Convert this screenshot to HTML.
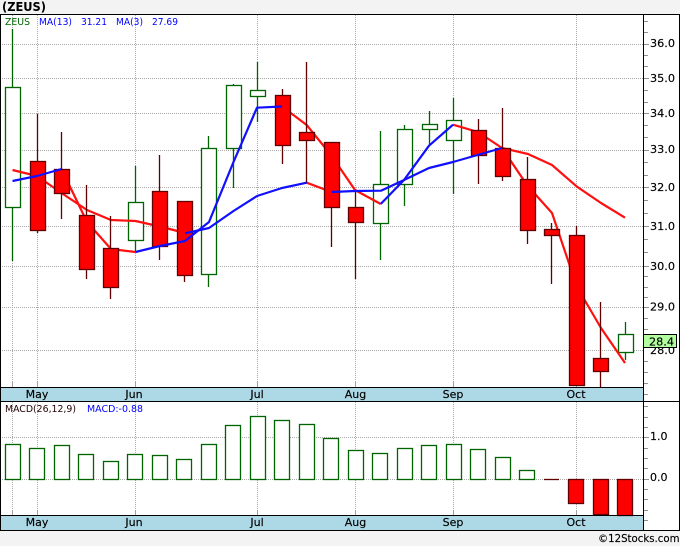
<!DOCTYPE html>
<html><head><meta charset="utf-8"><style>
html,body{margin:0;padding:0;background:#f3f3f3}
svg{display:block}
text{font-family:"DejaVu Sans","Liberation Sans",sans-serif}
.c{shape-rendering:crispEdges}
</style></head><body>
<svg width="680" height="546" viewBox="0 0 680 546" xmlns="http://www.w3.org/2000/svg">
<rect width="680" height="546" fill="#f3f3f3"/>
<rect x="0" y="14" width="680" height="517" fill="#fff"/>
<g class="c">
<rect x="0" y="387" width="643" height="14" fill="#add8e6"/>
<rect x="0" y="515" width="643" height="15" fill="#add8e6"/>
<g stroke="#aaaaaa" stroke-width="1" stroke-dasharray="1 1" fill="none">
<path d="M2 44.500H643M2 78.500H643M2 113.500H643M2 150.500H643M2 187.500H643M2 226.500H643M2 266.500H643M2 307.500H643M2 350.500H643M2 437.500H643M2 479.500H643"/>
<path d="M12.500 15V382M37.500 15V382M135.500 15V382M257.500 15V382M355.500 15V382M453.500 15V382M576.500 15V382"/>
<path d="M12.500 402V510M37.500 402V510M135.500 402V510M257.500 402V510M355.500 402V510M453.500 402V510M576.500 402V510"/>
</g>
<path stroke="#a0a0a0" fill="none" d="M12.500 382V387M37.500 382V387M135.500 382V387M257.500 382V387M355.500 382V387M453.500 382V387M576.500 382V387M12.500 510V515M37.500 510V515M135.500 510V515M257.500 510V515M355.500 510V515M453.500 510V515M576.500 510V515"/>
<path stroke="#909090" fill="none" d="M644 21.500h4M644 32.500h4M644 44.500h5M644 55.500h4M644 66.500h4M644 78.500h5M644 90.500h4M644 102.500h4M644 113.500h5M644 125.500h4M644 137.500h4M644 150.500h5M644 162.500h4M644 175.500h4M644 187.500h5M644 200.500h4M644 213.500h4M644 226.500h5M644 239.500h4M644 252.500h4M644 266.500h5M644 276.500h4M644 287.500h4M644 297.500h4M644 307.500h5M644 318.500h4M644 329.500h4M644 361.500h4M644 372.500h4M644 383.500h4M644 394.500h4M644 406.500h4M644 417.500h4M644 427.500h4M644 437.500h5M644 448.500h4M644 458.500h4M644 468.500h4M644 479.500h5M644 489.500h4M644 499.500h4M644 510.500h4M644 520.500h4"/>
</g>
<!-- green candles -->
<g fill="#fff" stroke="#006400" stroke-width="1.3">
<path fill="none" d="M12.500 29V87M12.500 207V261M135.500 166V202M135.500 240V252M208.500 136V148M208.500 274V287M233.500 84V85M233.500 148V188M257.500 62V90M257.500 96V122M380.500 131V184M380.500 223V260M404.500 125V129M404.500 184V206M429.500 111V124M429.500 129V145M453.500 98V120M453.500 140V194M625.500 322V334M625.500 352V360"/>
<rect x="5.500" y="87.500" width="15" height="120"/>
<rect x="128.500" y="202.500" width="15" height="38"/>
<rect x="201.500" y="148.500" width="15" height="126"/>
<rect x="226.500" y="85.500" width="15" height="63"/>
<rect x="250.500" y="90.500" width="15" height="6"/>
<rect x="373.500" y="184.500" width="15" height="39"/>
<rect x="397.500" y="129.500" width="15" height="55"/>
<rect x="422.500" y="124.500" width="15" height="5"/>
<rect x="446.500" y="120.500" width="15" height="20"/>
<rect x="618.500" y="334.500" width="15" height="18"/>
</g>
<!-- red MA segments -->
<g fill="none" stroke="#ff1010" stroke-width="2.2" stroke-linejoin="round">
<polyline points="12.500,170 37,176 61.500,193 87,210 111,220 135.500,221 160,226.500 185,233"/>
<polyline points="61.500,169 87,222 111,249 135.500,252"/>
<polyline points="282,106.500 306.700,125 331,155 355,190 380.700,204"/>
<polyline points="306.700,182.700 331.500,192"/>
<polyline points="453,124.700 478,132 502,148 527,185 552,213 577,287 601,328 625,363"/>
<polyline points="502,148 528,154 552,165 577,186.700 601,203 625,217.700"/>
</g>
<!-- red candles -->
<g stroke-width="1.3">
<path fill="none" stroke="#600000" d="M37.500 114V161M37.500 230V233M61.500 132V169M61.500 193V219M86.500 185V215M86.500 269V279M110.500 216V248M110.500 287V299M159.500 155V191M159.500 246V260M184.500 275V282M282.500 89V95M282.500 145V164M306.500 62V132M306.500 140V183M331.500 207V247M355.500 190V207M355.500 222V279M478.500 119V130M478.500 155V184M502.500 108V148M502.500 176V181M527.500 157V179M527.500 230V244M551.500 223V229M551.500 235V284M576.500 226V235M600.500 302V358M600.500 371V387"/>
<g fill="#ff0000" stroke="#600000">
<rect x="30.500" y="161.500" width="15" height="69"/>
<rect x="54.500" y="169.500" width="15" height="24"/>
<rect x="79.500" y="215.500" width="15" height="54"/>
<rect x="103.500" y="248.500" width="15" height="39"/>
<rect x="152.500" y="191.500" width="15" height="55"/>
<rect x="177.500" y="201.500" width="15" height="74"/>
<rect x="275.500" y="95.500" width="15" height="50"/>
<rect x="299.500" y="132.500" width="15" height="8"/>
<rect x="324.500" y="142.500" width="15" height="65"/>
<rect x="348.500" y="207.500" width="15" height="15"/>
<rect x="471.500" y="130.500" width="15" height="25"/>
<rect x="495.500" y="148.500" width="15" height="28"/>
<rect x="520.500" y="179.500" width="15" height="51"/>
<rect x="544.500" y="229.500" width="15" height="6"/>
<rect x="569.500" y="235.500" width="15" height="150"/>
<rect x="593.500" y="358.500" width="15" height="13"/>
</g>
</g>
<!-- blue MA segments -->
<g fill="none" stroke="#1010ff" stroke-width="2.2" stroke-linejoin="round">
<polyline points="12.500,181 37,176 61.500,169"/>
<polyline points="135.500,252 160,246 185,241 209,222 233.500,162 257,107.700 282,106.500"/>
<polyline points="185,233.300 209,228 233.500,211 257,196 282,188 306.700,182.700"/>
<polyline points="331.500,192 355,191 381,190.700 404,180 429,168 453,162 502,148"/>
<polyline points="380.700,204 404,180 429,145.700 453,124.700"/>
</g>
<!-- MACD bars -->
<g fill="#fff" stroke="#006400" stroke-width="1.3">
<rect x="5.500" y="444.500" width="15" height="35"/>
<rect x="29.500" y="448.500" width="15" height="31"/>
<rect x="54.500" y="445.500" width="15" height="34"/>
<rect x="78.500" y="454.500" width="15" height="25"/>
<rect x="103.500" y="461.500" width="15" height="18"/>
<rect x="127.500" y="454.500" width="15" height="25"/>
<rect x="152.500" y="455.500" width="15" height="24"/>
<rect x="176.500" y="459.500" width="15" height="20"/>
<rect x="201.500" y="444.500" width="15" height="35"/>
<rect x="225.500" y="425.500" width="15" height="54"/>
<rect x="250.500" y="416.500" width="15" height="63"/>
<rect x="274.500" y="420.500" width="15" height="59"/>
<rect x="299.500" y="424.500" width="15" height="55"/>
<rect x="323.500" y="438.500" width="15" height="41"/>
<rect x="348.500" y="450.500" width="15" height="29"/>
<rect x="372.500" y="453.500" width="15" height="26"/>
<rect x="397.500" y="448.500" width="15" height="31"/>
<rect x="421.500" y="445.500" width="15" height="34"/>
<rect x="446.500" y="444.500" width="15" height="35"/>
<rect x="470.500" y="449.500" width="15" height="30"/>
<rect x="495.500" y="457.500" width="15" height="22"/>
<rect x="519.500" y="470.500" width="15" height="9"/>
</g>
<g fill="#ff0000" stroke="#600000" stroke-width="1.3">
<path fill="none" d="M544 479.500H559"/>
<rect x="568.500" y="479.500" width="15" height="24"/>
<rect x="593.500" y="479.500" width="15" height="35"/>
<rect x="617.500" y="479.500" width="15" height="36"/>
</g>
<!-- frame -->
<g class="c" fill="#000">
<rect x="0" y="14" width="680" height="1"/>
<rect x="0" y="14" width="1" height="517"/>
<rect x="679" y="14" width="1" height="517"/>
<rect x="643" y="14" width="1" height="517"/>
<rect x="0" y="387" width="643" height="1"/>
<rect x="0" y="401" width="680" height="1"/>
<rect x="0" y="515" width="643" height="1"/>
<rect x="0" y="530" width="680" height="1"/>
</g>
<text x="2" y="11" font-size="12" font-weight="bold" fill="#000" textLength="44" lengthAdjust="spacingAndGlyphs">(ZEUS)</text>
<g font-size="10">
<text x="5" y="25" fill="#006400" textLength="25" lengthAdjust="spacingAndGlyphs">ZEUS</text>
<text x="39" y="25" fill="#0000ff" textLength="33" lengthAdjust="spacingAndGlyphs">MA(13)</text>
<text x="81" y="25" fill="#0000ff" textLength="26" lengthAdjust="spacingAndGlyphs">31.21</text>
<text x="116" y="25" fill="#0000ff" textLength="27" lengthAdjust="spacingAndGlyphs">MA(3)</text>
<text x="152" y="25" fill="#0000ff" textLength="26" lengthAdjust="spacingAndGlyphs">27.69</text>
<text x="5" y="412" fill="#200000" textLength="71" lengthAdjust="spacingAndGlyphs">MACD(26,12,9)</text>
<text x="87" y="412" fill="#0000ff" textLength="56" lengthAdjust="spacingAndGlyphs">MACD:-0.88</text>
</g>
<g font-size="11" fill="#000" stroke="#000" stroke-width="0.15">
<text x="650" y="47" textLength="25" lengthAdjust="spacingAndGlyphs">36.0</text>
<text x="650" y="82" textLength="25" lengthAdjust="spacingAndGlyphs">35.0</text>
<text x="650" y="117" textLength="25" lengthAdjust="spacingAndGlyphs">34.0</text>
<text x="650" y="153" textLength="25" lengthAdjust="spacingAndGlyphs">33.0</text>
<text x="650" y="191" textLength="25" lengthAdjust="spacingAndGlyphs">32.0</text>
<text x="650" y="230" textLength="25" lengthAdjust="spacingAndGlyphs">31.0</text>
<text x="650" y="270" textLength="25" lengthAdjust="spacingAndGlyphs">30.0</text>
<text x="650" y="310.500" textLength="25" lengthAdjust="spacingAndGlyphs">29.0</text>
<text x="650" y="354" textLength="25" lengthAdjust="spacingAndGlyphs">28.0</text>
<text x="650" y="440" textLength="17.500" lengthAdjust="spacingAndGlyphs">1.0</text>
<text x="650" y="481" textLength="17.500" lengthAdjust="spacingAndGlyphs">0.0</text>
<g text-anchor="middle">
<text x="37" y="398">May</text><text x="134" y="398">Jun</text><text x="257" y="398">Jul</text><text x="355.500" y="398">Aug</text><text x="453" y="398">Sep</text><text x="576" y="398">Oct</text>
<text x="37" y="526">May</text><text x="134" y="526">Jun</text><text x="257" y="526">Jul</text><text x="355.500" y="526">Aug</text><text x="453" y="526">Sep</text><text x="576" y="526">Oct</text>
</g>
<text x="598" y="542" textLength="81.500" lengthAdjust="spacingAndGlyphs">©12Stocks.com</text>
</g>
<rect class="c" x="643.500" y="334.500" width="33" height="13" fill="#b3ff9f" stroke="#000"/>
<text x="649" y="345.300" font-size="11" fill="#000" stroke="#000" stroke-width="0.15" textLength="25" lengthAdjust="spacingAndGlyphs">28.4</text>
</svg>
</body></html>
